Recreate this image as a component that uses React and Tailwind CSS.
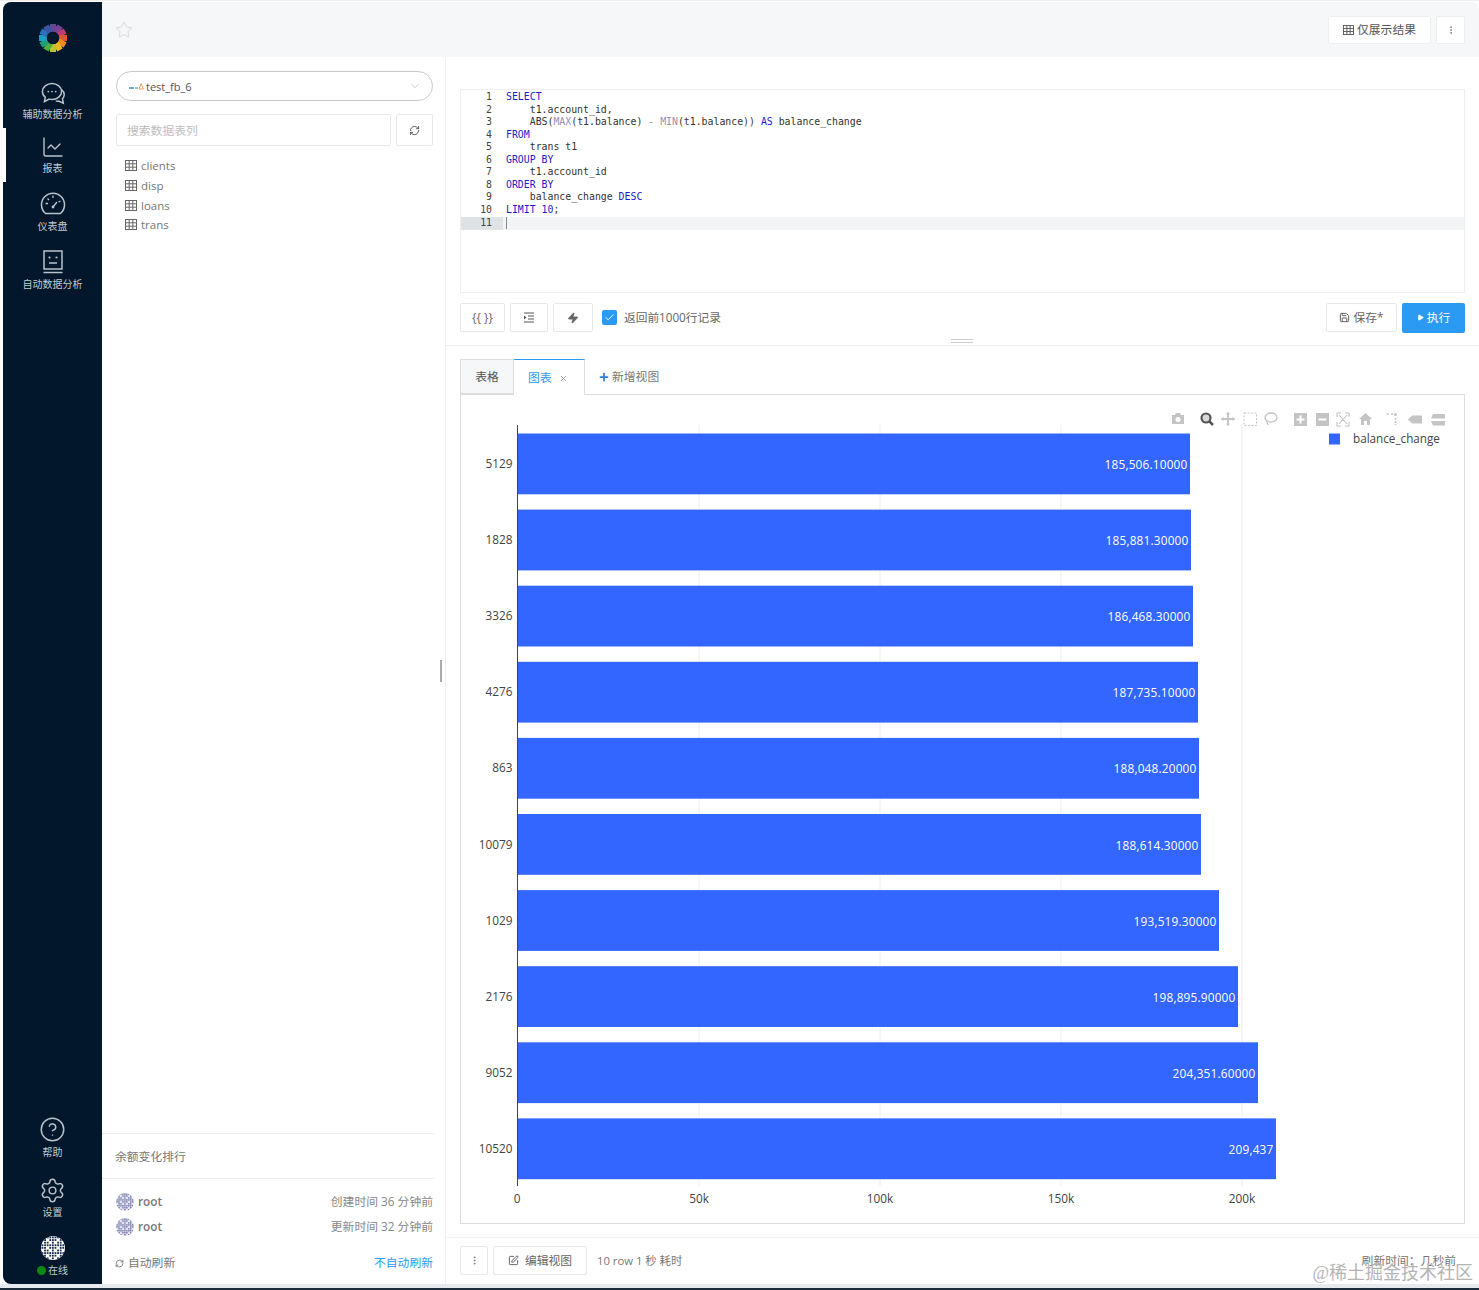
import React from 'react';
import { Star, ChevronDown, RefreshCw, Check, Plus, X, Zap, Save, Play, SquarePen, CircleHelp, Settings, ChartLine, EllipsisVertical } from 'lucide-react';

const TableIcon = ({ size = 12, color = '#666' }) => (
  <svg width={size} height={size - 1} viewBox="0 0 12 11" fill="none" stroke={color} strokeWidth="1">
    <rect x="0.5" y="0.5" width="11" height="10" />
    <path d="M0.5 3.8H11.5M0.5 7.2H11.5M4.2 0.5V10.5M7.8 0.5V10.5" />
  </svg>
);

const Identicon = ({ size = 18, bg = '#e4e5f0', fg = '#6a6ea6' }) => {
  const cells = [];
  for (let y = 0; y < 9; y++) {
    for (let x = 0; x < 9; x++) {
      const mx = x > 4 ? 8 - x : x;
      if ((mx * 3 + y * 5 + mx * y) % 3 !== 1) cells.push(<rect key={`${x}-${y}`} x={x * 2 + 0.4} y={y * 2 + 0.4} width="1.4" height="1.4" fill={fg} />);
    }
  }
  return (
    <svg width={size} height={size} viewBox="0 0 18.4 18.4" className="shrink-0 rounded-full" style={{ background: bg }}>
      {cells}
    </svg>
  );
};

const Logo = () => {
  const colors = ['#5f4b8b', '#7a3f98', '#c23b6e', '#e2582c', '#f08a24', '#e8b923', '#b7c62f', '#4fae3f', '#1e9e74', '#1b9fc4', '#2a6fc0', '#3a55a5'];
  return (
    <svg width="30" height="30" viewBox="-15 -15 30 30">
      {colors.map((c, i) => (
        <rect key={c} x="-3" y="-14" width="6" height="8" fill={c} transform={`rotate(${i * 30})`} />
      ))}
      <circle r="6.2" fill="#04182c" />
    </svg>
  );
};

const ChatIcon = () => (
  <svg width="24" height="24" viewBox="0 0 24 24" fill="none" stroke="#b9c2ca" strokeWidth="1.5">
    <path d="M20.5 7.5c2 1.6 3 3.6 2.6 6-.2 1.4-.8 2.4-1.6 3.3l.8 4.4-4.6-2.2c-1 .2-2 .2-3-.1" />
    <path d="M11 1.5c5.3 0 9.6 3.6 9.6 8s-4.3 8-9.6 8c-1 0-2-.1-2.9-.4L3.5 19.6l.7-4.4C2.4 13.8 1.4 11.8 1.4 9.5c0-4.4 4.3-8 9.6-8z" />
    <circle cx="7.3" cy="9.6" r=".9" fill="#b9c2ca" stroke="none" />
    <circle cx="11" cy="9.6" r=".9" fill="#b9c2ca" stroke="none" />
    <circle cx="14.7" cy="9.6" r=".9" fill="#b9c2ca" stroke="none" />
  </svg>
);

const GaugeIcon = () => (
  <svg width="26" height="26" viewBox="0 0 26 26" fill="none" stroke="#b9c2ca" strokeWidth="1.5">
    <path d="M5.5 22.5A11.5 11.5 0 1 1 20.5 22.5Z" />
    <path d="M13 4.5V7M5.5 12.5H8M20.5 10L18.5 11M7.5 7.5L9 9M13 16L17 11" strokeWidth="1.3" />
    <circle cx="13" cy="16" r="1.4" fill="#b9c2ca" stroke="none" />
  </svg>
);

const BotIcon = () => (
  <svg width="22" height="24" viewBox="0 0 22 24" fill="none" stroke="#b9c2ca" strokeWidth="1.5">
    <rect x="2" y="1" width="18" height="18" />
    <circle cx="7.5" cy="7.5" r="1.1" fill="#b9c2ca" stroke="none" />
    <circle cx="14.5" cy="7.5" r="1.1" fill="#b9c2ca" stroke="none" />
    <path d="M7 13H15M1.5 22.5H20.5" />
  </svg>
);

const IndentIcon = () => (
  <svg width="12" height="11" viewBox="0 0 12 11" fill="none" stroke="#555" strokeWidth="1">
    <path d="M1 1H11M5 4H11M5 7H11M1 10H11" />
    <path d="M1 3.5L3.5 5.5L1 7.5Z" fill="#555" stroke="none" />
  </svg>
);

const NavItem = ({ icon, label, className = '' }) => (
  <div className={`flex flex-col items-center text-[#c3cad0] text-[10px] leading-[14px] ${className}`}>
    {icon}
    <span>{label}</span>
  </div>
);

const Sidebar = () => (
  <div className="w-[99px] shrink-0 bg-[#02172c] flex flex-col items-center relative">
    <div className="mt-[21px] mb-[22px] h-[30px]"><Logo /></div>
    <NavItem className="h-[55px] pt-[7px] [&>svg]:mb-[1px]" icon={<ChatIcon />} label="辅助数据分析" />
    <div className="relative w-full">
      <div className="absolute left-0 top-[-2px] w-[3px] h-[54px] bg-white" />
      <NavItem className="h-[55px] pt-[5px] [&>svg]:mb-[2px]" icon={<ChartLine size={24} strokeWidth={1.4} color="#b9c2ca" />} label="报表" />
    </div>
    <NavItem className="h-[60px] pt-[6px] [&>svg]:mb-[2px]" icon={<GaugeIcon />} label="仪表盘" />
    <NavItem className="pt-[5px] [&>svg]:mb-[3px]" icon={<BotIcon />} label="自动数据分析" />
    <div className="mt-auto flex flex-col items-center pb-[7px]">
      <NavItem className="h-[61px] [&>svg]:mb-[2px]" icon={<CircleHelp size={27} strokeWidth={1.3} color="#b9c2ca" />} label="帮助" />
      <NavItem className="h-[59px] [&>svg]:mb-[1px]" icon={<Settings size={27} strokeWidth={1.3} color="#b9c2ca" />} label="设置" />
      <div className="flex flex-col items-center gap-[3px]">
        <Identicon size={24} bg="#ffffff" fg="#1b2d55" />
        <div className="flex items-center gap-[2px] text-[10px] leading-[14px] text-[#c3cad0]">
          <span className="w-[9px] h-[9px] rounded-full bg-[#0a8a12]" />
          <span>在线</span>
        </div>
      </div>
    </div>
  </div>
);

const tables = ['clients', 'disp', 'loans', 'trans'];

const LeftPanel = () => (
  <div className="w-[344px] shrink-0 border-r border-[#eeeeee] flex flex-col relative text-[11.8px] text-[#666]">
    <div className="pt-[14px] pl-[14px] pr-[12px]">
      <div className="h-[30px] rounded-full border border-[#c9c9c9] flex items-center pl-[12px] pr-[10px]">
        <svg width="15" height="8" viewBox="0 0 15 8" className="mr-[2px]">
          <path d="M0 6H5" stroke="#3c8fc0" strokeWidth="1.5" />
          <path d="M6 6H9" stroke="#7fb0c8" strokeWidth="1.5" />
          <path d="M10 7L12 1.5L14.5 7Z" fill="none" stroke="#e8a060" />
        </svg>
        <span className="flex-1 text-[11px] text-[#555] pt-[2px]">test_fb_6</span>
        <ChevronDown size={14} strokeWidth={1} color="#aaa" />
      </div>
      <div className="flex gap-[5px] mt-[13px]">
        <div className="flex-1 h-[32px] border border-[#e8e8e8] rounded-[2px] flex items-center pl-[10px] pt-[2px] text-[#bdbdbd]">搜索数据表列</div>
        <div className="w-[37px] h-[32px] border border-[#e8e8e8] rounded-[2px] flex items-center justify-center">
          <RefreshCw size={11} color="#555" />
        </div>
      </div>
      <ul className="mt-[10px] pl-[9px] flex flex-col text-[11.5px]">
        {tables.map((t) => (
          <li key={t} className="flex items-center gap-[4px] h-[19.7px]">
            <TableIcon />
            <span className="text-[#777]">{t}</span>
          </li>
        ))}
      </ul>
    </div>
    <div className="absolute right-[3px] top-[603px] w-[2px] h-[22px] bg-[#aaaaaa]" />
    <div className="mt-auto">
      <div className="mr-[10px] border-t border-[#eeeeee] h-[45px] flex items-center pl-[13px] pt-[2px] text-[#777]">余额变化排行</div>
      <div className="mr-[10px] border-t border-[#eeeeee] pt-[14px]">
        <div className="mr-[2px] pl-[14px] flex flex-col gap-[7px]">
          <div className="flex items-center h-[18px]"><Identicon /><span className="ml-[4px] flex-1 font-semibold text-[#777]">root</span><span className="text-[#888]">创建时间 36 分钟前</span></div>
          <div className="flex items-center h-[18px]"><Identicon /><span className="ml-[4px] flex-1 font-semibold text-[#777]">root</span><span className="text-[#888]">更新时间 32 分钟前</span></div>
        </div>
      </div>
      <div className="pl-[13px] pr-[12px] mt-[18px] mb-[12px] flex items-center">
        <RefreshCw size={9} color="#666" className="mr-[4px]" />
        <span className="flex-1 text-[#777]">自动刷新</span>
        <span className="text-[#2b9af3]">不自动刷新</span>
      </div>
    </div>
  </div>
);

const K = ({ children }) => <span className="text-[#1c1cc8]">{children}</span>;
const F = ({ children }) => <span className="text-[#9a8fb0]">{children}</span>;

const codeLines = [
  <K>SELECT</K>,
  <>{'    t1.account_id,'}</>,
  <>{'    ABS('}<F>MAX</F>{'(t1.balance) '}<F>-</F>{' '}<F>MIN</F>{'(t1.balance)) '}<K>AS</K>{' balance_change'}</>,
  <K>FROM</K>,
  <>{'    trans t1'}</>,
  <K>GROUP BY</K>,
  <>{'    t1.account_id'}</>,
  <K>ORDER BY</K>,
  <>{'    balance_change '}<K>DESC</K></>,
  <><K>LIMIT</K>{' '}<K>10</K>{';'}</>,
  <span className="inline-block w-px h-[12px] bg-[#888] align-middle" />,
];

const Editor = () => (
  <div className="h-[204px] border border-[#eeeeee] pt-[1px] font-['DejaVu_Sans_Mono','Liberation_Mono',monospace] text-[9.85px] leading-[12.55px] text-[#333]">
    {codeLines.map((line, i) => (
      <div key={i} className={`flex ${i === 10 ? 'bg-[#f3f4f5] mt-[1px]' : ''}`}>
        <div className={`w-[42px] pr-[11px] text-right text-[#444] shrink-0 ${i === 10 ? 'bg-[#dfe3e6]' : ''}`}>{i + 1}</div>
        <pre className="pl-[3px] font-[inherit]">{line}</pre>
      </div>
    ))}
  </div>
);

const ToolBtn = ({ className = '', children }) => (
  <div className={`h-[29px] border border-[#e8e8e8] rounded-[2px] flex items-center justify-center text-[11.8px] text-[#666] ${className}`}>{children}</div>
);

const Toolbar = () => (
  <div className="flex items-center mt-[10px] h-[29px]">
    <ToolBtn className="w-[45px]">{'{{ }}'}</ToolBtn>
    <ToolBtn className="w-[38px] ml-[5px]"><IndentIcon /></ToolBtn>
    <ToolBtn className="w-[40px] ml-[5px]"><Zap size={12} color="#666" fill="#666" /></ToolBtn>
    <div className="w-[15px] h-[15px] ml-[9px] rounded-[2px] bg-[#2b9af3] flex items-center justify-center"><Check size={11} color="#fff" strokeWidth={2} /></div>
    <span className="ml-[7px] text-[11.7px] text-[#666]">返回前1000行记录</span>
    <ToolBtn className="ml-auto w-[71px] gap-[3px]"><Save size={11} color="#555" />保存*</ToolBtn>
    <div className="ml-[5px] w-[63px] h-[30px] rounded-[2px] bg-[#2b9af3] text-white text-[11.8px] flex items-center justify-center gap-[3px]">
      <Play size={7} fill="#fff" color="#fff" />执行
    </div>
  </div>
);

const Tabs = () => (
  <div className="flex h-[36px] border-b border-[#dddddd] text-[11.8px]">
    <div className="w-[54px] bg-[#f6f7f9] border border-[#dddddd] flex items-center justify-center pt-[1px] text-[#555]">表格</div>
    <div className="w-[71px] -mb-px bg-white border-t border-t-[#2b9af3] border-r border-r-[#dddddd] flex items-center pl-[14px] pt-[1px] text-[#2b9af3]">
      图表
      <X size={9} color="#888" className="ml-[7px]" />
    </div>
    <div className="flex items-center pl-[13px] pt-[1px] text-[#777]">
      <Plus size={12} color="#2b7fd8" strokeWidth={3.5} className="mr-[2px]" />新增视图
    </div>
  </div>
);

const rows = [
  { id: '5129', label: '185,506.10000', end: 1190 },
  { id: '1828', label: '185,881.30000', end: 1191 },
  { id: '3326', label: '186,468.30000', end: 1193 },
  { id: '4276', label: '187,735.10000', end: 1198 },
  { id: '863', label: '188,048.20000', end: 1199 },
  { id: '10079', label: '188,614.30000', end: 1201 },
  { id: '1029', label: '193,519.30000', end: 1219 },
  { id: '2176', label: '198,895.90000', end: 1238 },
  { id: '9052', label: '204,351.60000', end: 1258 },
  { id: '10520', label: '209,437', end: 1276 },
];

const ticks = [
  { x: 517, t: '0' },
  { x: 699, t: '50k' },
  { x: 880, t: '100k' },
  { x: 1061, t: '150k' },
  { x: 1242, t: '200k' },
];

const Modebar = () => (
  <g>
    {/* camera */}
    <path d="M1172 415h3l1-2h4l1 2h3v9h-12z" fill="#c4c4c4" />
    <circle cx="1178" cy="419.5" r="2.5" fill="#fff" />
    {/* zoom, active */}
    <circle cx="1206" cy="418" r="4.5" fill="#d8d8d8" stroke="#555" strokeWidth="2.2" />
    <path d="M1209.5 421.5L1213 425" stroke="#555" strokeWidth="2.5" />
    {/* pan */}
    <path d="M1228 412.5V425.5M1221.5 419H1234.5" stroke="#c4c4c4" strokeWidth="1.8" />
    <path d="M1228 412l-2 2.5h4zM1228 426l-2-2.5h4zM1221 419l2.5-2v4zM1235 419l-2.5-2v4z" fill="#c4c4c4" />
    {/* box select */}
    <rect x="1244" y="413" width="12.5" height="12.5" fill="none" stroke="#c4c4c4" strokeDasharray="2 1.5" />
    {/* lasso */}
    <ellipse cx="1271" cy="417.5" rx="6" ry="4.5" fill="none" stroke="#c4c4c4" strokeWidth="1.3" />
    <path d="M1267 421c-1 2 1 2 1 4" fill="none" stroke="#c4c4c4" strokeWidth="1.3" />
    {/* zoom in/out */}
    <rect x="1294" y="413" width="13" height="13" fill="#c4c4c4" />
    <path d="M1300.5 415.5v8M1296.5 419.5h8" stroke="#fff" strokeWidth="2" />
    <rect x="1316" y="413" width="13" height="13" fill="#c4c4c4" />
    <path d="M1318.5 419.5h8" stroke="#fff" strokeWidth="2" />
    {/* autoscale */}
    <path d="M1337 417v-4h4M1345 413h4v4M1349 422v4h-4M1341 426h-4v-4M1339 415l8 9M1347 415l-8 9" fill="none" stroke="#c4c4c4" strokeWidth="1.1" />
    {/* home */}
    <path d="M1359 419l6.5-6 6.5 6h-2v6h-3v-4h-3v4h-3v-6z" fill="#c4c4c4" />
    {/* spikes */}
    <path d="M1387 414h2M1391 414h2" stroke="#c4c4c4" strokeWidth="1.5" />
    <circle cx="1395.5" cy="414.5" r="1.5" fill="#c4c4c4" />
    <path d="M1395.5 418v7" stroke="#c4c4c4" strokeWidth="1.5" strokeDasharray="2 1" />
    {/* hover closest, compare */}
    <path d="M1408 419.5l4-4h10v8h-10z" fill="#c4c4c4" />
    <path d="M1433 414h12v4.5h-14zM1431 421h14v4.5h-12z" fill="#c4c4c4" />
  </g>
);

const Chart = () => (
  <div className="h-[829px] border border-t-0 border-[#dddddd]">
    <svg width="1003" height="828" viewBox="461 395 1003 828" className="block font-['Open_Sans',sans-serif]">
      {ticks.slice(1).map((t) => (
        <line key={t.x} x1={t.x} x2={t.x} y1="425" y2="1186" stroke="#eeeeee" />
      ))}
      {rows.map((r, i) => {
        const y = 433.5 + i * 76.1;
        return (
          <g key={r.id}>
            <rect x="518" y={y} width={r.end - 518} height="60.8" fill="#3366ff" />
            <text x={r.end - 2.5} y={y + 35.5} textAnchor="end" fontSize="11.8" letterSpacing="0.2" fill="#ffffff">{r.label}</text>
            <text x="512.5" y={y + 34.5} textAnchor="end" fontSize="11.8" fill="#444444">{r.id}</text>
          </g>
        );
      })}
      <line x1="517.5" x2="517.5" y1="425" y2="1186" stroke="#444444" />
      {ticks.map((t) => (
        <text key={t.t} x={t.x} y="1203" textAnchor="middle" fontSize="11.8" fill="#444444">{t.t}</text>
      ))}
      <Modebar />
      <rect x="1329" y="433.5" width="11" height="11" fill="#3366ff" />
      <text x="1353" y="443" fontSize="11.7" fill="#444444">balance_change</text>
    </svg>
  </div>
);

const BottomBar = () => (
  <div className="mt-[13px] -mx-[14px] px-[14px] pt-[8px] border-t border-[#f3f3f3] flex items-start text-[11.8px] text-[#777]">
    <ToolBtn className="w-[28px]"><EllipsisVertical size={11} color="#777" /></ToolBtn>
    <ToolBtn className="w-[94px] ml-[5px] gap-[6px]"><SquarePen size={11} color="#555" />编辑视图</ToolBtn>
    <span className="ml-[10px] leading-[29px] text-[11.3px]">10 row 1 秒 耗时</span>
    <span className="ml-auto mr-[9px] leading-[29px]">刷新时间：几秒前</span>
  </div>
);

export default function App() {
  return (
    <div className="relative w-full h-[1290px] bg-white overflow-hidden font-['Open_Sans','Noto_Sans_CJK_SC',sans-serif] border-t border-t-[#eeeeee]">
      <div className="ml-[3px] mt-px h-[1282px] flex rounded-[8px] overflow-hidden">
        <Sidebar />
        <div className="flex-1 flex flex-col min-w-0">
          <div className="h-[55px] shrink-0 bg-[#f6f7f9] flex items-center pl-[13px] pr-[14px]">
            <Star size={18} strokeWidth={1} color="#cfcfcf" />
            <div className="ml-auto w-[103px] h-[28px] bg-white border border-[#eeeeee] rounded-[2px] flex items-center justify-center gap-[3px] text-[11.8px] text-[#555]">
              <TableIcon size={11} color="#555" />仅展示结果
            </div>
            <div className="ml-[5px] w-[29px] h-[28px] bg-white border border-[#eeeeee] rounded-[2px] flex items-center justify-center">
              <EllipsisVertical size={10} color="#777" />
            </div>
          </div>
          <div className="flex flex-1 min-h-0">
            <LeftPanel />
            <div className="flex-1 min-w-0 flex flex-col">
              <div className="pt-[32px] pl-[14px] pr-[14px] h-[289px] border-b border-[#eeeeee] relative shrink-0">
                <Editor />
                <Toolbar />
                <div className="absolute left-[505px] bottom-[2px] w-[22px] h-[4px] border-y border-[#cccccc]" />
              </div>
              <div className="pt-[13px] pl-[14px] pr-[14px]">
                <Tabs />
                <Chart />
                <BottomBar />
              </div>
            </div>
          </div>
        </div>
      </div>
      <div className="absolute left-0 right-0 bottom-[2px] h-[4px] bg-[#e6e9ee]" />
      <div className="absolute left-0 right-0 bottom-0 h-[2px] bg-[#1c2c3a]" />
      <div className="absolute right-[6px] bottom-[5px] text-[18px] leading-[24px] text-[#b4b4b4] font-['Liberation_Serif','Noto_Sans_CJK_SC',serif]">@稀土掘金技术社区</div>
    </div>
  );
}
